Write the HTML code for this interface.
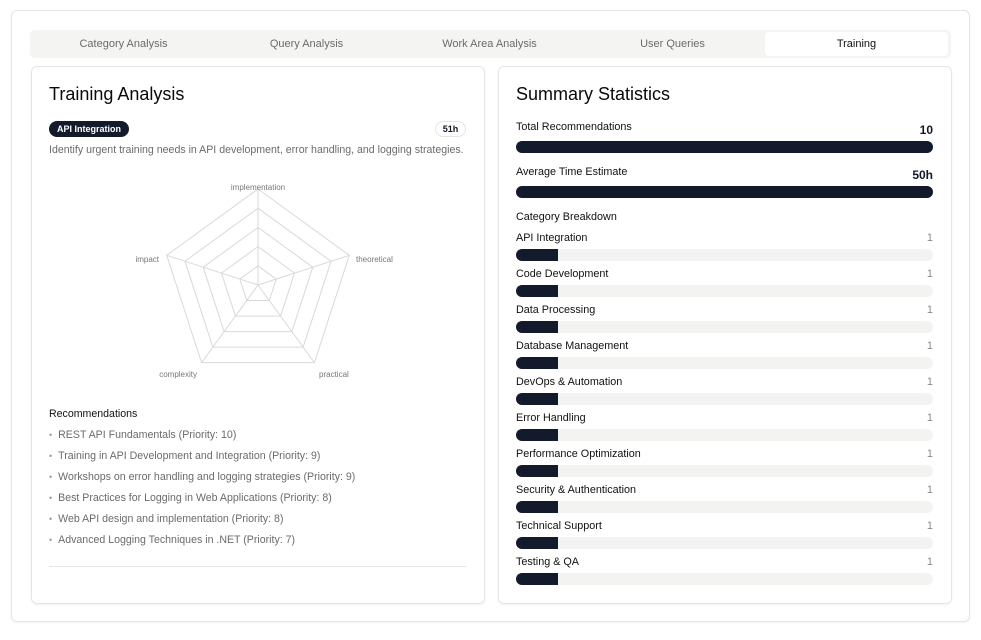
<!DOCTYPE html>
<html><head><meta charset="utf-8"><style>
*{box-sizing:border-box;margin:0;padding:0}
body{width:981px;height:640px;background:#fff;font-family:"Liberation Sans",sans-serif;position:relative;overflow:hidden;color:#111827}
.a{position:absolute}
.outer{left:11px;top:10px;width:959px;height:612px;border:1px solid #e5e5e5;border-radius:6px;box-shadow:0 1px 2px rgba(0,0,0,.05)}
.tabs{left:30px;top:30px;width:921px;height:28px;background:#f4f4f2;border-radius:5px}
.tab{top:0;height:28px;line-height:28px;font-size:11px;color:#6b6b6b;text-align:center;width:183px}
.tab.on{background:#fff;color:#111;top:2px;height:24px;line-height:24px;border-radius:4px}
.card{border:1px solid #e5e5e5;border-radius:6px;box-shadow:0 1px 2px rgba(0,0,0,.06)}
h2{font-size:18px;font-weight:normal;color:#0a0a0a;position:absolute}
.sm{font-size:10.6px}
.bar{height:12px;border-radius:6px;background:#f3f3f1;left:516px;width:417px}
.fill{height:12px;border-radius:6px 0 0 6px;background:#121a2c;width:42px}
.lab{left:516px;font-size:10.8px;color:#111}
.num{right:48px;font-size:11px;color:#8a8a8a}
li{list-style:none;font-size:10.6px;color:#6b6b6b;height:21px}
li:before{content:"•";color:#999;margin-right:6px;font-size:9px}
</style></head><body>
<div class="a outer"></div>
<div class="a tabs">
<div class="a tab" style="left:2px">Category Analysis</div>
<div class="a tab" style="left:185px">Query Analysis</div>
<div class="a tab" style="left:368px">Work Area Analysis</div>
<div class="a tab" style="left:551px">User Queries</div>
<div class="a tab on" style="left:735px">Training</div>
</div>
<div class="a card" style="left:31px;top:66px;width:454px;height:538px"></div>
<h2 style="left:49px;top:84px">Training Analysis</h2>
<div class="a" style="left:49px;top:121px;height:16px;padding:0 8px;line-height:16px;background:#121a2c;color:#fff;font-size:9px;border-radius:8px;font-weight:bold">API Integration</div>
<div class="a" style="left:435px;top:121px;height:16px;width:31px;line-height:14px;border:1px solid #e5e5e5;border-radius:8px;font-size:9px;text-align:center;font-weight:bold">51h</div>
<div class="a sm" style="left:49px;top:144px;color:#6b6b6b">Identify urgent training needs in API development, error handling, and logging strategies.</div>
<svg class="a" style="left:0;top:0" width="490" height="400">
<g transform="translate(258,285)" fill="none" stroke="#d9d9d9">
<polygon vector-effect="non-scaling-stroke" transform="scale(19.2)" points="0,-1 0.951,-0.309 0.588,0.809 -0.588,0.809 -0.951,-0.309"/>
<polygon vector-effect="non-scaling-stroke" transform="scale(38.4)" points="0,-1 0.951,-0.309 0.588,0.809 -0.588,0.809 -0.951,-0.309"/>
<polygon vector-effect="non-scaling-stroke" transform="scale(57.6)" points="0,-1 0.951,-0.309 0.588,0.809 -0.588,0.809 -0.951,-0.309"/>
<polygon vector-effect="non-scaling-stroke" transform="scale(76.8)" points="0,-1 0.951,-0.309 0.588,0.809 -0.588,0.809 -0.951,-0.309"/>
<polygon vector-effect="non-scaling-stroke" transform="scale(96)" points="0,-1 0.951,-0.309 0.588,0.809 -0.588,0.809 -0.951,-0.309"/>
<path d="M0 0L0 -96M0 0L91.3 -29.7M0 0L56.4 77.7M0 0L-56.4 77.7M0 0L-91.3 -29.7"/>
</g>
<g font-size="8" fill="#777" font-family="Liberation Sans,sans-serif">
<text x="258" y="190" text-anchor="middle">implementation</text>
<text x="356" y="262">theoretical</text>
<text x="319" y="377">practical</text>
<text x="197" y="377" text-anchor="end">complexity</text>
<text x="159" y="262" text-anchor="end">impact</text>
</g>
</svg>
<div class="a sm" style="left:49px;top:408px;color:#111">Recommendations</div>
<ul class="a" style="left:49px;top:429px">
<li>REST API Fundamentals (Priority: 10)</li>
<li>Training in API Development and Integration (Priority: 9)</li>
<li>Workshops on error handling and logging strategies (Priority: 9)</li>
<li>Best Practices for Logging in Web Applications (Priority: 8)</li>
<li>Web API design and implementation (Priority: 8)</li>
<li>Advanced Logging Techniques in .NET (Priority: 7)</li>
</ul>
<div class="a" style="left:49px;top:566px;width:417px;height:1px;background:#e5e5e5"></div>

<div class="a card" style="left:498px;top:66px;width:454px;height:538px"></div>
<h2 style="left:516px;top:84px">Summary Statistics</h2>
<div class="a lab" style="top:121px">Total Recommendations</div>
<div class="a" style="right:48px;top:123px;font-size:12px;font-weight:bold">10</div>
<div class="a" style="left:516px;top:141px;width:417px;height:12px;border-radius:6px;background:#121a2c"></div>
<div class="a lab" style="top:166px">Average Time Estimate</div>
<div class="a" style="right:48px;top:168px;font-size:12px;font-weight:bold">50h</div>
<div class="a" style="left:516px;top:186px;width:417px;height:12px;border-radius:6px;background:#121a2c"></div>
<div class="a lab" style="top:211px">Category Breakdown</div>

<div class="a lab" style="top:232px">API Integration</div><div class="a num" style="top:232px">1</div><div class="a bar" style="top:249px"><div class="fill"></div></div>
<div class="a lab" style="top:268px">Code Development</div><div class="a num" style="top:268px">1</div><div class="a bar" style="top:285px"><div class="fill"></div></div>
<div class="a lab" style="top:304px">Data Processing</div><div class="a num" style="top:304px">1</div><div class="a bar" style="top:321px"><div class="fill"></div></div>
<div class="a lab" style="top:340px">Database Management</div><div class="a num" style="top:340px">1</div><div class="a bar" style="top:357px"><div class="fill"></div></div>
<div class="a lab" style="top:376px">DevOps &amp; Automation</div><div class="a num" style="top:376px">1</div><div class="a bar" style="top:393px"><div class="fill"></div></div>
<div class="a lab" style="top:412px">Error Handling</div><div class="a num" style="top:412px">1</div><div class="a bar" style="top:429px"><div class="fill"></div></div>
<div class="a lab" style="top:448px">Performance Optimization</div><div class="a num" style="top:448px">1</div><div class="a bar" style="top:465px"><div class="fill"></div></div>
<div class="a lab" style="top:484px">Security &amp; Authentication</div><div class="a num" style="top:484px">1</div><div class="a bar" style="top:501px"><div class="fill"></div></div>
<div class="a lab" style="top:520px">Technical Support</div><div class="a num" style="top:520px">1</div><div class="a bar" style="top:537px"><div class="fill"></div></div>
<div class="a lab" style="top:556px">Testing &amp; QA</div><div class="a num" style="top:556px">1</div><div class="a bar" style="top:573px"><div class="fill"></div></div>
</body></html>
